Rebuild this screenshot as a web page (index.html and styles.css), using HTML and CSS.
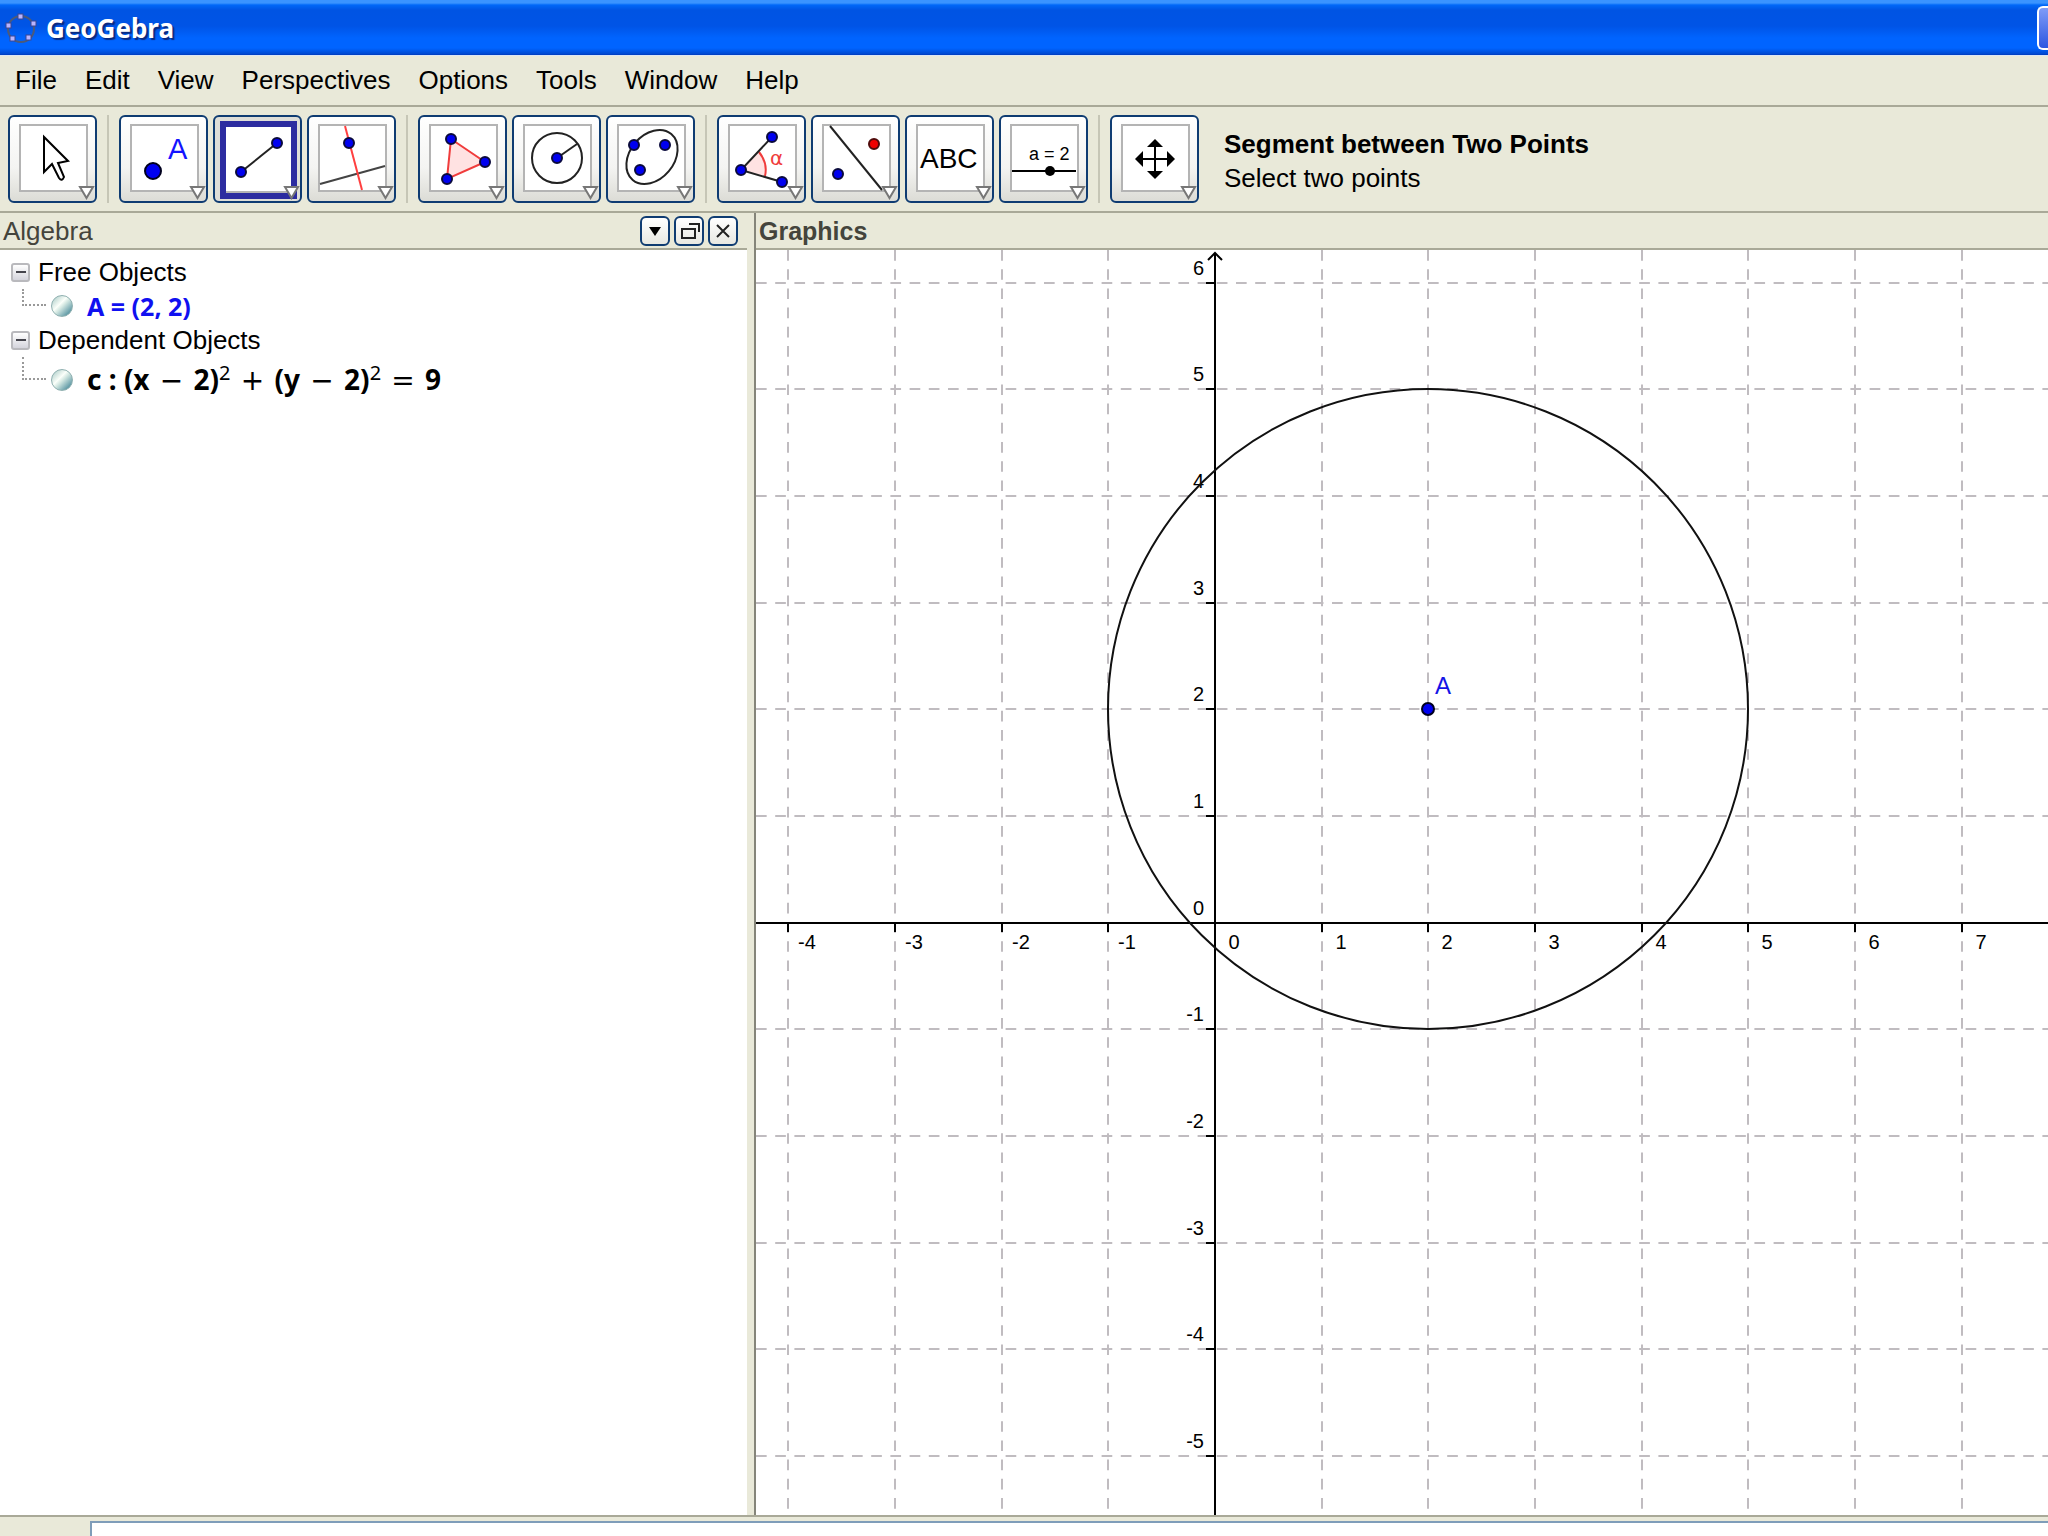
FILE: index.html
```html
<!DOCTYPE html>
<html lang="en">

<head>
    <meta charset="UTF-8">
    <meta name="viewport" content="width=device-width, initial-scale=1.0">
    <title>GeoGebra</title>

    <link rel="stylesheet" href="styles.css">
</head>

<body>
    <header class="titlebar">
        <svg class="app-icon" width="34" height="34" viewBox="0 0 34 34">
            <circle cx="17" cy="18" r="13" fill="none" stroke="#4d5a78" stroke-width="2" />
            <g fill="#b9b4ff" stroke="#3c4690" stroke-width="1">
                <rect x="14" y="3" width="5" height="5" />
                <rect x="27" y="10" width="5" height="5" />
                <rect x="22" y="24" width="5" height="5" />
                <rect x="6" y="25" width="5" height="5" />
                <rect x="2" y="12" width="5" height="5" />
            </g>
        </svg>
        <h1 class="title">GeoGebra</h1>
        <button class="caption-button" type="button" aria-label="Minimize"></button>
    </header>

    <nav class="menubar">
        <a href="#">File</a>
        <a href="#">Edit</a>
        <a href="#">View</a>
        <a href="#">Perspectives</a>
        <a href="#">Options</a>
        <a href="#">Tools</a>
        <a href="#">Window</a>
        <a href="#">Help</a>
    </nav>

    <!-- shared parts of the tool icons -->
    <svg class="defs" width="0" height="0">
        <defs>
            <g id="frame">
                <rect x="12" y="10" width="67" height="66" fill="#fff" stroke="#b4b4b4" stroke-width="2" />
            </g>
            <path id="arrow" d="M72 72H85L78.500 83Z" fill="#fff" stroke="#777" stroke-width="2" />
            <circle id="dot" r="5" fill="#0000f0" stroke="#0a0a3c" stroke-width="2" />
        </defs>
    </svg>

    <div class="toolbar">
        <button class="tool" type="button" aria-label="Move">
            <svg viewBox="2 2 85 84">
                <use href="#frame" />
                <path d="M36 22V57L44 49L51 63Q54 67 56 62L50 48L60 46Z" fill="#fff" stroke="#000" stroke-width="2" />
                <use href="#arrow" />
            </svg>
        </button>
        <span class="separator"></span>
        <button class="tool" type="button" aria-label="New Point">
            <svg viewBox="2 2 85 84">
                <use href="#frame" />
                <circle cx="34" cy="56" r="8" fill="#0000f0" stroke="#00001e" stroke-width="2" />
                <text x="49" y="44" font-size="29" fill="#1414ff">A</text>
                <use href="#arrow" />
            </svg>
        </button>
        <button class="tool selected" type="button" aria-label="Segment between Two Points">
            <svg viewBox="2 2 85 84">
                <rect x="10" y="9" width="71" height="72" fill="#fff" stroke="#2c2ca0" stroke-width="6" />
                <path d="M13 77H78" stroke="#b4b4b4" stroke-width="2" />
                <path d="M28 57L64 28" stroke="#222" stroke-width="2" />
                <use href="#dot" x="28" y="57" />
                <use href="#dot" x="64" y="28" />
                <use href="#arrow" />
            </svg>
        </button>
        <button class="tool" type="button" aria-label="Perpendicular Line">
            <svg viewBox="2 2 85 84">
                <use href="#frame" />
                <path d="M13 69L78 51" stroke="#444" stroke-width="2" />
                <path d="M38 11L55 75" stroke="#ff4040" stroke-width="2" />
                <use href="#dot" x="42" y="28" />
                <use href="#arrow" />
            </svg>
        </button>
        <span class="separator"></span>
        <button class="tool" type="button" aria-label="Polygon">
            <svg viewBox="2 2 85 84">
                <use href="#frame" />
                <path d="M33 24L67 47L29 64Z" fill="#ffe2e2" stroke="#f03c3c" stroke-width="2" />
                <use href="#dot" x="33" y="24" />
                <use href="#dot" x="67" y="47" />
                <use href="#dot" x="29" y="64" />
                <use href="#arrow" />
            </svg>
        </button>
        <button class="tool" type="button" aria-label="Circle with Center through Point">
            <svg viewBox="2 2 85 84">
                <use href="#frame" />
                <circle cx="45" cy="43" r="25" fill="none" stroke="#222" stroke-width="2" />
                <path d="M45 43L65 29" stroke="#222" stroke-width="2" />
                <use href="#dot" x="45" y="43" />
                <use href="#arrow" />
            </svg>
        </button>
        <button class="tool" type="button" aria-label="Ellipse">
            <svg viewBox="2 2 85 84">
                <use href="#frame" />
                <ellipse cx="46" cy="42" rx="30" ry="22" transform="rotate(-50 46 42)" fill="none" stroke="#222" stroke-width="2" />
                <use href="#dot" x="28" y="30" />
                <use href="#dot" x="59" y="30" />
                <use href="#dot" x="34" y="55" />
                <use href="#arrow" />
            </svg>
        </button>
        <span class="separator"></span>
        <button class="tool" type="button" aria-label="Angle">
            <svg viewBox="2 2 85 84">
                <use href="#frame" />
                <path d="M24 55L42 37Q51 48 48 61Z" fill="#ffe2e2" />
                <path d="M42 37Q51 48 48 61" fill="none" stroke="#f03c3c" stroke-width="2" />
                <path d="M55 22L24 55L65 67" fill="none" stroke="#222" stroke-width="2" />
                <text class="alpha" x="53" y="50" font-size="20" fill="#f03c3c">α</text>
                <use href="#dot" x="24" y="55" />
                <use href="#dot" x="55" y="22" />
                <use href="#dot" x="65" y="67" />
                <use href="#arrow" />
            </svg>
        </button>
        <button class="tool" type="button" aria-label="Mirror Object at Line">
            <svg viewBox="2 2 85 84">
                <use href="#frame" />
                <path d="M19 11L71 75" stroke="#222" stroke-width="2" />
                <circle cx="63" cy="29" r="5" fill="#f00000" stroke="#500a0a" stroke-width="2" />
                <use href="#dot" x="27" y="59" />
                <use href="#arrow" />
            </svg>
        </button>
        <button class="tool" type="button" aria-label="Insert Text">
            <svg viewBox="2 2 85 84">
                <use href="#frame" />
                <text x="15" y="53" font-size="28">ABC</text>
                <use href="#arrow" />
            </svg>
        </button>
        <button class="tool" type="button" aria-label="Slider">
            <svg viewBox="2 2 85 84">
                <use href="#frame" />
                <text x="30" y="45" font-size="18">a = 2</text>
                <path d="M13 56H77" stroke="#000" stroke-width="2" />
                <circle cx="51" cy="56" r="5" />
                <use href="#arrow" />
            </svg>
        </button>
        <span class="separator"></span>
        <button class="tool" type="button" aria-label="Move Drawing Pad">
            <svg viewBox="2 2 85 84">
                <use href="#frame" />
                <path d="M45 28V60M29 44H61" stroke="#000" stroke-width="2" />
                <path d="M45 24L53 32H37ZM45 64L53 56H37ZM25 44L33 36V52ZM65 44L57 36V52Z" />
                <use href="#arrow" />
            </svg>
        </button>
        <div class="tool-help">
            <strong>Segment between Two Points</strong>
            <span>Select two points</span>
        </div>
    </div>

    <main class="workspace">
        <section class="algebra">
            <div class="panel-header">
                <h2>Algebra</h2>
                <button class="panel-button" type="button" aria-label="Toggle style bar">
                    <svg width="26" height="26" viewBox="0 0 26 26"><path d="M7 9H19L13 18Z" /></svg>
                </button>
                <button class="panel-button" type="button" aria-label="View in new window">
                    <svg width="26" height="26" viewBox="0 0 26 26" fill="none" stroke="#222" stroke-width="2"><path d="M6 11H19V20H6ZM13 6H23V14" /></svg>
                </button>
                <button class="panel-button" type="button" aria-label="Close">
                    <svg width="26" height="26" viewBox="0 0 26 26" stroke="#222" stroke-width="2"><path d="M7 7L19 19M19 7L7 19" /></svg>
                </button>
            </div>
            <ul class="tree">
                <li>
                    <div class="node"><button class="expander" type="button" aria-label="Collapse"></button>Free Objects</div>
                    <div class="leaf"><i class="branch"></i><i class="marble"></i><span class="point">A = (2, 2)</span></div>
                </li>
                <li>
                    <div class="node"><button class="expander" type="button" aria-label="Collapse"></button>Dependent Objects</div>
                    <div class="leaf tall"><i class="branch"></i><i class="marble"></i><span class="conic">c : (x <b>−</b> 2)<sup>2</sup> <b>+</b> (y <b>−</b> 2)<sup>2</sup> <b>=</b> 9</span></div>
                </li>
            </ul>
        </section>

        <section class="graphics">
            <div class="panel-header">
                <h2>Graphics</h2>
            </div>
            <div class="canvas">
                <svg id="plot"></svg>
            </div>
        </section>
    </main>

    <footer class="inputbar">
        <input type="text" aria-label="Input">
    </footer>

    <script>
        const plot = document.getElementById("plot");
        const origin = { x: 459, y: 673 };
        const unit = 320 / 3;

        function add(tag, attrs, text) {
            const el = document.createElementNS("http://www.w3.org/2000/svg", tag);
            for (const key in attrs) {
                el.setAttribute(key, attrs[key]);
            }
            if (text !== undefined) {
                el.textContent = text;
            }
            plot.appendChild(el);
        }

        function px(x) {
            return Math.round(origin.x + x * unit);
        }

        function py(y) {
            return Math.floor(origin.y - y * unit);
        }

        function draw() {
            const width = plot.clientWidth;
            const height = plot.clientHeight;
            const left = Math.ceil(-origin.x / unit);
            const right = Math.floor((width - origin.x) / unit);
            const bottom = Math.ceil((origin.y - height) / unit);
            const top = Math.floor(origin.y / unit);
            const dash = `${unit * 5 / 50} ${unit * 4 / 50}`;

            plot.innerHTML = "";

            // grid
            for (let x = left; x <= right; x++) {
                if (x !== 0) {
                    add("path", { class: "grid", "stroke-dasharray": dash, d: `M${px(x)} 0V${height}` });
                }
            }
            for (let y = bottom; y <= top; y++) {
                if (y !== 0) {
                    add("path", { class: "grid", "stroke-dasharray": dash, d: `M0 ${py(y)}H${width}` });
                }
            }

            // axes
            add("path", { class: "axis", d: `M0 ${origin.y}H${width}` });
            add("path", { class: "axis", d: `M${origin.x} ${height}V3` });
            add("path", { class: "axis", d: `M${origin.x - 7} 10L${origin.x} 3L${origin.x + 7} 10` });

            for (let x = left; x <= right; x++) {
                add("path", { class: "axis", d: `M${px(x)} ${origin.y}v9` });
                add("text", { class: "x-label", x: px(x) + 19, y: origin.y + 26 }, x);
            }
            for (let y = bottom; y <= top; y++) {
                add("path", { class: "axis", d: `M${origin.x} ${py(y)}h-9` });
                add("text", { class: "y-label", x: origin.x - 11, y: py(y) - 8 }, y);
            }

            // c: (x - 2)^2 + (y - 2)^2 = 9
            add("circle", { class: "conic-line", cx: px(2), cy: py(2), r: 3 * unit });

            // A = (2, 2)
            add("circle", { class: "free-point", cx: px(2), cy: py(2), r: 6 });
            add("text", { class: "point-label", x: px(2) + 7, y: py(2) - 15 }, "A");
        }

        draw();
        window.addEventListener("resize", draw);
    </script>
</body>

</html>
```
FILE: styles.css
```css
* {
    box-sizing: border-box;
}

body {
    display: flex;
    flex-direction: column;
    height: 100vh;
    margin: 0;
    overflow: hidden;
    background-color: #e9e9d9;
    color: #000;
    font-family: "Liberation Sans", Arial, sans-serif;
    font-size: 26px;
}

h1, h2 {
    margin: 0;
}

button {
    padding: 0;
}

.defs {
    position: absolute;
}

.titlebar {
    display: flex;
    align-items: center;
    height: 56px;
    padding-left: 4px;
    border-bottom: 1px solid #dce6f5;
    background: linear-gradient(#3a94ff 0, #3a94ff 3px, #0068f8 5px, #0054e3 10px, #0054e6 26px, #0064ff 38px, #0064ff 48px, #0048d0 54px, #0038b8 55px);
}

.title {
    flex: 1;
    margin-left: 8px;
    color: #fff;
    font-family: "Noto Sans", sans-serif;
    font-size: 26px;
    line-height: 34px;
    text-shadow: 2px 2px 1px #0a2a80;
}

.caption-button {
    width: 11px;
    height: 44px;
    border: 2px solid #fff;
    border-right: 0;
    border-radius: 6px 0 0 6px;
    background: linear-gradient(#7f9cf8, #2c56e0);
}

.menubar {
    display: flex;
    align-items: center;
    gap: 28px;
    height: 51px;
    padding: 0 15px;
    border-bottom: 2px solid #a9a998;
}

.menubar a {
    color: #000;
    text-decoration: none;
}

.toolbar {
    display: flex;
    align-items: center;
    gap: 5px;
    height: 106px;
    padding: 0 8px;
    border-bottom: 2px solid #a9a998;
}

.tool {
    flex: none;
    width: 89px;
    height: 88px;
    border: 2px solid #0f3c72;
    border-radius: 6px;
    background: linear-gradient(#fff, #f4f4f2 60%, #dcdcd6);
}

.tool.selected {
    background: #deded8;
}

.tool svg {
    display: block;
    width: 85px;
    height: 84px;
}

.tool text {
    font-family: "Liberation Sans", Arial, sans-serif;
}

.tool .alpha {
    font-family: "DejaVu Sans", sans-serif;
}

.separator {
    width: 2px;
    height: 88px;
    margin: 0 5px;
    background-color: #c6c6b6;
}

.tool-help {
    display: flex;
    flex-direction: column;
    margin-left: 20px;
    padding-top: 4px;
    line-height: 34px;
}

.workspace {
    display: flex;
    flex: 1;
    min-height: 0;
}

.algebra {
    display: flex;
    flex-direction: column;
    width: 747px;
    background-color: #fff;
}

.graphics {
    display: flex;
    flex: 1;
    flex-direction: column;
    min-width: 0;
    margin-left: 7px;
    border-left: 2px solid #85857a;
    background-color: #fff;
}

.panel-header {
    display: flex;
    align-items: center;
    gap: 4px;
    height: 37px;
    padding: 0 9px 0 3px;
    border-bottom: 2px solid #a9a998;
    background-color: #e9e9d9;
    color: #44443c;
}

.panel-header h2 {
    flex: 1;
    font-size: 25px;
    line-height: 34px;
}

.algebra h2 {
    font-size: 26px;
    font-weight: normal;
}

.panel-button {
    width: 30px;
    height: 30px;
    border: 2px solid #0f3c72;
    border-radius: 6px;
    background: linear-gradient(#fff, #e8e8e2);
}

.panel-button svg {
    display: block;
}

.tree {
    margin: 0;
    padding: 5px 11px;
    list-style: none;
}

.node,
.leaf {
    display: flex;
    align-items: center;
    height: 34px;
}

.leaf.tall {
    height: 46px;
}

.expander {
    width: 19px;
    height: 19px;
    margin-right: 8px;
    border: 2px solid #b9b9bd;
    border-radius: 3px;
    background: linear-gradient(#44444c, #44444c) center / 10px 2px no-repeat, linear-gradient(#fff, #d4d4dc);
}

.branch {
    align-self: flex-start;
    width: 24px;
    height: 50%;
    margin: 0 5px 0 11px;
    border-bottom: 2px dotted #999;
    border-left: 2px dotted #999;
}

.marble {
    width: 22px;
    height: 22px;
    margin-right: 14px;
    border: 1px solid #8fb0b0;
    border-radius: 50%;
    background: linear-gradient(135deg, #b8d4d0 10%, #fbfffa 40%, #d4e8e2 52%, #5f99a6 85%);
}

.point {
    color: #1010f0;
    font-family: "Noto Sans", sans-serif;
    font-size: 25px;
    font-weight: bold;
}

.conic {
    font-family: "Noto Sans", sans-serif;
    font-size: 28px;
    font-weight: bold;
    line-height: 42px;
}

.conic b {
    margin: 0 3px;
    font-family: "DejaVu Sans", sans-serif;
    font-weight: normal;
}

.conic sup {
    font-size: 20px;
    font-weight: normal;
    line-height: 0;
}

.canvas {
    flex: 1;
    min-height: 0;
}

#plot {
    display: block;
    width: 100%;
    height: 100%;
    font-size: 20px;
}

.grid {
    stroke: #c0bcc0;
    stroke-width: 2px;
}

.axis {
    fill: none;
    stroke: #000;
    stroke-width: 2px;
}

.x-label {
    text-anchor: middle;
}

.y-label {
    text-anchor: end;
}

.conic-line {
    fill: none;
    stroke: #111;
    stroke-width: 2px;
}

.free-point {
    fill: #0000f0;
    stroke: #00001e;
    stroke-width: 2px;
}

.point-label {
    fill: #1414e6;
    font-size: 24px;
}

.inputbar {
    height: 21px;
    padding: 4px 0 0 90px;
    overflow: hidden;
    border-top: 2px solid #a9a998;
}

.inputbar input {
    display: block;
    width: 100%;
    height: 40px;
    border: 2px solid #7f9db9;
    border-right: 0;
    background-color: #fff;
    font-size: 26px;
}
```
